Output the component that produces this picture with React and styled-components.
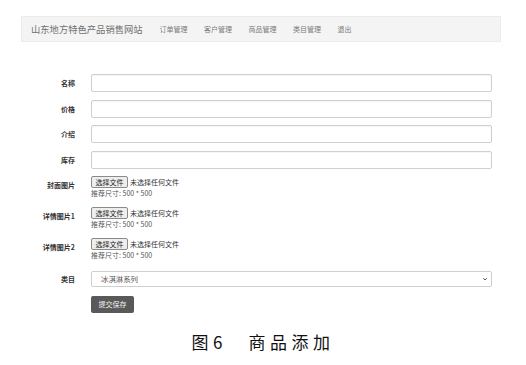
import React from "react";
import styled, { createGlobalStyle } from "styled-components";

const Global = createGlobalStyle`
  html, body { margin: 0; padding: 0; background: #fff; }
  body {
    width: 526px; height: 365px; overflow: hidden;
    font-family: "Noto Sans CJK SC", "Noto Sans", "Liberation Sans", sans-serif;
    color: #333;
  }
`;

const Page = styled.div`
  display: flex;
  flex-direction: column;
  padding-top: 16px;
`;

const Navbar = styled.nav`
  margin: 0 25px 0 21px;
  height: 26px;
  box-sizing: border-box;
  background: #f4f4f4;
  border: 1px solid #ececec;
  display: flex;
  align-items: center;
  padding-left: 9px;
`;

const Brand = styled.span`
  font-size: 9.3px;
  color: #707070;
  margin-right: 17px;
  white-space: nowrap;
`;

const NavLinks = styled.div`
  display: flex;
  gap: 16.5px;
`;

const NavLink = styled.span`
  font-size: 7px;
  color: #7a7a7a;
  white-space: nowrap;
`;

const Form = styled.form`
  margin: 32px 34px 0 0;
  display: grid;
  grid-template-columns: 75px 1fr;
  column-gap: 16px;
`;

const Label = styled.label`
  font-size: 7px;
  font-weight: 700;
  color: #333;
  text-align: right;
  align-self: ${p => (p.$top ? "start" : "center")};
  padding-top: ${p => (p.$top ? "4px" : "0")};
  margin-bottom: ${p => p.$gap}px;
  white-space: nowrap;
`;

const Field = styled.div`
  display: flex;
  flex-direction: column;
  align-items: stretch;
  margin-bottom: ${p => p.$gap}px;
  min-width: 0;
  font-size: 7px;
`;

const TextInput = styled.div`
  height: 18px;
  box-sizing: border-box;
  border: 1px solid #cfcfcf;
  border-radius: 2px;
  background: #fff;
  box-shadow: inset 0 1px 1px rgba(0,0,0,0.04);
`;

const FileLine = styled.div`
  display: flex;
  align-items: center;
  gap: 2px;
  height: 12px;
`;

const FileButton = styled.span`
  box-sizing: border-box;
  height: 12px;
  width: 37px;
  display: flex;
  align-items: center;
  justify-content: center;
  border: 1px solid #8a8a8a;
  border-radius: 2px;
  background: #eeeeee;
  font-size: 7px;
  color: #222;
`;

const FileText = styled.span`
  font-size: 7px;
  color: #333;
`;

const Hint = styled.div`
  font-size: 7px;
  line-height: 11px;
  color: #555;
`;

const SelectBox = styled.div`
  height: 16px;
  box-sizing: border-box;
  border: 1px solid #cfcfcf;
  border-radius: 2px;
  display: flex;
  align-items: center;
  justify-content: space-between;
  padding: 0 3px 0 9px;
  font-size: 7.4px;
  color: #555;
`;

const Submit = styled.button`
  align-self: flex-start;
  width: 43px;
  height: 17px;
  padding: 0;
  border: none;
  border-radius: 2px;
  background: #595959;
  color: #f2f2f2;
  font-family: inherit;
  font-size: 7px;
`;

const Caption = styled.div`
  margin-top: 19px;
  text-align: center;
  font-size: 17px;
  line-height: 20px;
  letter-spacing: 4.5px;
  color: #111;
`;

const Chevron = () => (
  <svg width="6" height="6" viewBox="0 0 6 6">
    <path d="M1.2 2.2 L3 4 L4.8 2.2" fill="none" stroke="#444" strokeWidth="0.9" />
  </svg>
);

const navs = ["订单管理", "客户管理", "商品管理", "类目管理", "退出"];
const texts = ["名称", "价格", "介绍", "库存"];
const files = ["封面图片", "详情图片1", "详情图片2"];

export default function App() {
  return (
    <Page>
      <Global />
      <Navbar>
        <Brand>山东地方特色产品销售网站</Brand>
        <NavLinks>
          {navs.map(n => <NavLink key={n}>{n}</NavLink>)}
        </NavLinks>
      </Navbar>
      <Form onSubmit={e => e.preventDefault()}>
        {texts.map(t => (
          <React.Fragment key={t}>
            <Label $gap={7.6}>{t}</Label>
            <Field $gap={7.6}><TextInput /></Field>
          </React.Fragment>
        ))}
        {files.map((f, i) => (
          <React.Fragment key={f}>
            <Label $top $gap={i === 2 ? 9.5 : 8}>{f}</Label>
            <Field $gap={i === 2 ? 9.5 : 8}>
              <FileLine>
                <FileButton>选择文件</FileButton>
                <FileText>未选择任何文件</FileText>
              </FileLine>
              <Hint>推荐尺寸: 500 * 500</Hint>
            </Field>
          </React.Fragment>
        ))}
        <Label $gap={9}>类目</Label>
        <Field $gap={9}>
          <SelectBox>
            <span>冰淇淋系列</span>
            <Chevron />
          </SelectBox>
        </Field>
        <span />
        <Field $gap={0}>
          <Submit type="submit">提交保存</Submit>
        </Field>
      </Form>
      <Caption>图6　商品添加</Caption>
    </Page>
  );
}
